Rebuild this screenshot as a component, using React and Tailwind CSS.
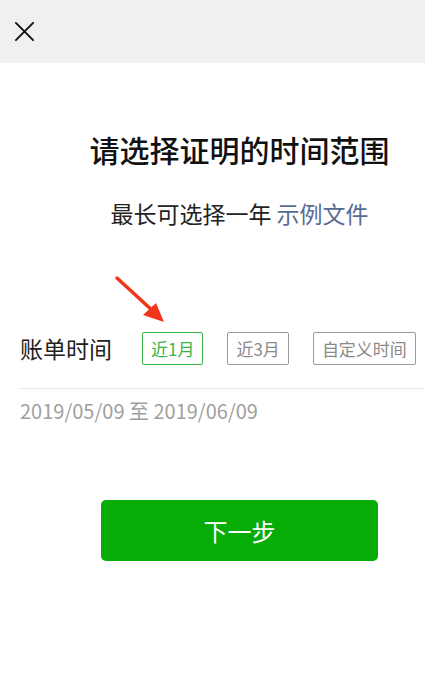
import { useState } from 'react';

const ranges = ['近1月', '近3月', '自定义时间'];

export default function App() {
    const [active, setActive] = useState(0);

    return (
        <div className="min-h-[691px] bg-white" style={{ fontFamily: '"Noto Sans CJK SC", "Noto Sans", sans-serif' }}>
            {/* top bar */}
            <header className="h-[63px] bg-[#f0f0f0] flex items-center pl-[14px]">
                <svg width="21" height="21" viewBox="0 0 22 22" className="text-[#111]">
                    <path d="M2 2 L20 20 M20 2 L2 20" stroke="currentColor" strokeWidth="2" strokeLinecap="round" />
                </svg>
            </header>

            <div className="pl-[54px] pt-[66px] text-center">
                <h1 className="text-[30px] leading-[40px] text-[#111] font-medium">请选择证明的时间范围</h1>
                <p className="mt-[29px] text-[23px] leading-[30px] text-[#222]">
                    最长可选择一年 <span className="text-[#576b95]">示例文件</span>
                </p>
            </div>

            {/* arrow pointing at the first option */}
            <div className="relative h-[103px]">
                <svg className="absolute left-[112px] top-[47px]" width="56" height="50" viewBox="0 0 56 50">
                    <path d="M5 3 L42 37" stroke="#f2341c" strokeWidth="3.5" strokeLinecap="round" />
                    <path d="M52 47 L31 40 L44 28 Z" fill="#f2341c" />
                </svg>
            </div>

            <div className="flex items-center pl-[20px] h-[34px]">
                <span className="text-[23px] leading-[34px] text-[#222] w-[122px]">账单时间</span>
                <div className="flex gap-[24px]">
                    {ranges.map((r, i) => (
                        <button key={r} onClick={() => setActive(i)}
                            className={`h-[33px] px-[8px] border rounded-[2px] text-[17px] leading-none ${i === active ? 'border-[#3cb34a] text-[#3cb34a]' : 'border-[#9a9a9a] text-[#8a8a8a]'}`}>
                            {r}
                        </button>
                    ))}
                </div>
            </div>

            <div className="ml-[20px] mt-[23px] border-t border-[#e6e6e6]" />
            <p className="pl-[20px] pt-[10px] text-[20px] leading-[24px] text-[#a0a0a0]">2019/05/09 至 2019/06/09</p>

            <div className="pl-[101px] pt-[77px]">
                <button className="w-[277px] h-[61px] rounded-[5px] bg-[#07ad07] text-white text-[24px]">下一步</button>
            </div>
        </div>
    );
}
